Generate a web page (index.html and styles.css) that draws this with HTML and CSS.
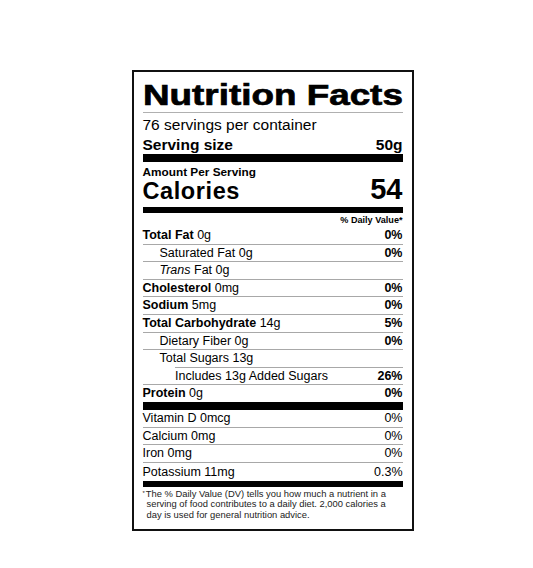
FILE: index.html
```html
<!DOCTYPE html>
<html lang="en">
<head>
  <meta charset="UTF-8">
  <meta name="viewport" content="width=device-width, initial-scale=1.0">
  <title>Nutrition Facts</title>
  <link rel="stylesheet" href="styles.css">
</head>
<body>
  <div class="page">
    <div class="label">
      <h1 class="title"><span>Nutrition Facts</span></h1>

      <div class="servings">
        <p class="per-container">76 servings per container</p>
        <p class="serving-size"><span>Serving size</span><span>50g</span></p>
      </div>
      <div class="bar bar-thick"></div>

      <div class="calories">
        <p class="amount">Amount Per Serving</p>
        <div class="cal-row">
          <span class="cal-label">Calories</span>
          <span class="cal-value">54</span>
        </div>
      </div>
      <div class="bar bar-medium"></div>

      <p class="dv-head">% Daily Value*</p>

      <div class="row first"><span><b>Total Fat</b> 0g</span><b>0%</b></div>
      <div class="row sub"><span>Saturated Fat 0g</span><b>0%</b></div>
      <div class="row sub"><span><i>Trans</i> Fat 0g</span></div>
      <div class="row"><span><b>Cholesterol</b> 0mg</span><b>0%</b></div>
      <div class="row"><span><b>Sodium</b> 5mg</span><b>0%</b></div>
      <div class="row"><span><b>Total Carbohydrate</b> 14g</span><b>5%</b></div>
      <div class="row sub"><span>Dietary Fiber 0g</span><b>0%</b></div>
      <div class="row sub"><span>Total Sugars 13g</span></div>
      <div class="row added"><span>Includes 13g Added Sugars</span><b>26%</b></div>
      <div class="row"><span><b>Protein</b> 0g</span><b>0%</b></div>
      <div class="bar bar-thick"></div>

      <div class="row first"><span>Vitamin D 0mcg</span><span>0%</span></div>
      <div class="row"><span>Calcium 0mg</span><span>0%</span></div>
      <div class="row"><span>Iron 0mg</span><span>0%</span></div>
      <div class="row last"><span>Potassium 11mg</span><span>0.3%</span></div>
      <div class="bar bar-medium"></div>

      <p class="footnote"><span class="star">*</span>The % Daily Value (DV) tells you how much a nutrient in a<br>serving of food contributes to a daily diet. 2,000 calories a<br>day is used for general nutrition advice.</p>
    </div>
  </div>
</body>
</html>
```

FILE: styles.css
```css
body, html {
  margin: 0;
  padding: 0;
  background-color: #fff;
  color: #000;
  font-family: "Liberation Sans", Arial, sans-serif;
}

p {
  margin: 0;
}

.page {
  padding: 70px 0 0 132px;
}

.label {
  width: 260px;
  border: 2px solid #111;
  padding: 0 9px 0 8.5px;
}

.title {
  margin: 0;
  padding-top: 7px;
  font-size: 29px;
  line-height: 33px;
  font-weight: bold;
  white-space: nowrap;
  border-bottom: 1px solid #b0b0b0;
}

.title span {
  display: inline-block;
  transform: scaleX(1.27);
  transform-origin: left;
  -webkit-text-stroke: 0.7px #000;
}

.servings {
  padding-top: 2px;
  font-size: 15.5px;
}

.per-container {
  line-height: 20px;
}

.serving-size {
  display: flex;
  justify-content: space-between;
  font-weight: bold;
  line-height: 19px;
}

.bar {
  background-color: #000;
}

.bar-thick {
  height: 8px;
}

.bar-medium {
  height: 6px;
}

.calories {
  padding-top: 3px;
}

.amount {
  font-size: 11.8px;
  font-weight: bold;
  line-height: 14px;
}

.cal-row {
  display: flex;
  justify-content: space-between;
  align-items: baseline;
  height: 28px;
  font-weight: bold;
  line-height: 21px;
}

.cal-label {
  font-size: 23.5px;
  letter-spacing: 0.6px;
}

.cal-value {
  font-size: 29px;
}

.dv-head {
  font-size: 9.1px;
  font-weight: bold;
  line-height: 14px;
  text-align: right;
}

.row {
  display: flex;
  justify-content: space-between;
  border-top: 1px solid #a8a8a8;
  font-size: 12.5px;
  line-height: 16.6px;
}

.row.first {
  border-top: none;
}

.row.sub span:first-child {
  padding-left: 17px;
}

.row.added {
  margin-left: 32.5px;
}

.row.last {
  line-height: 18px;
}

.footnote {
  padding: 1px 0 8.5px 4px;
  text-indent: -4px;
  font-size: 9.4px;
  line-height: 10.7px;
  color: #222;
  white-space: nowrap;
}

.star {
  font-size: 6px;
  vertical-align: 2px;
  margin-right: 1px;
}
```
